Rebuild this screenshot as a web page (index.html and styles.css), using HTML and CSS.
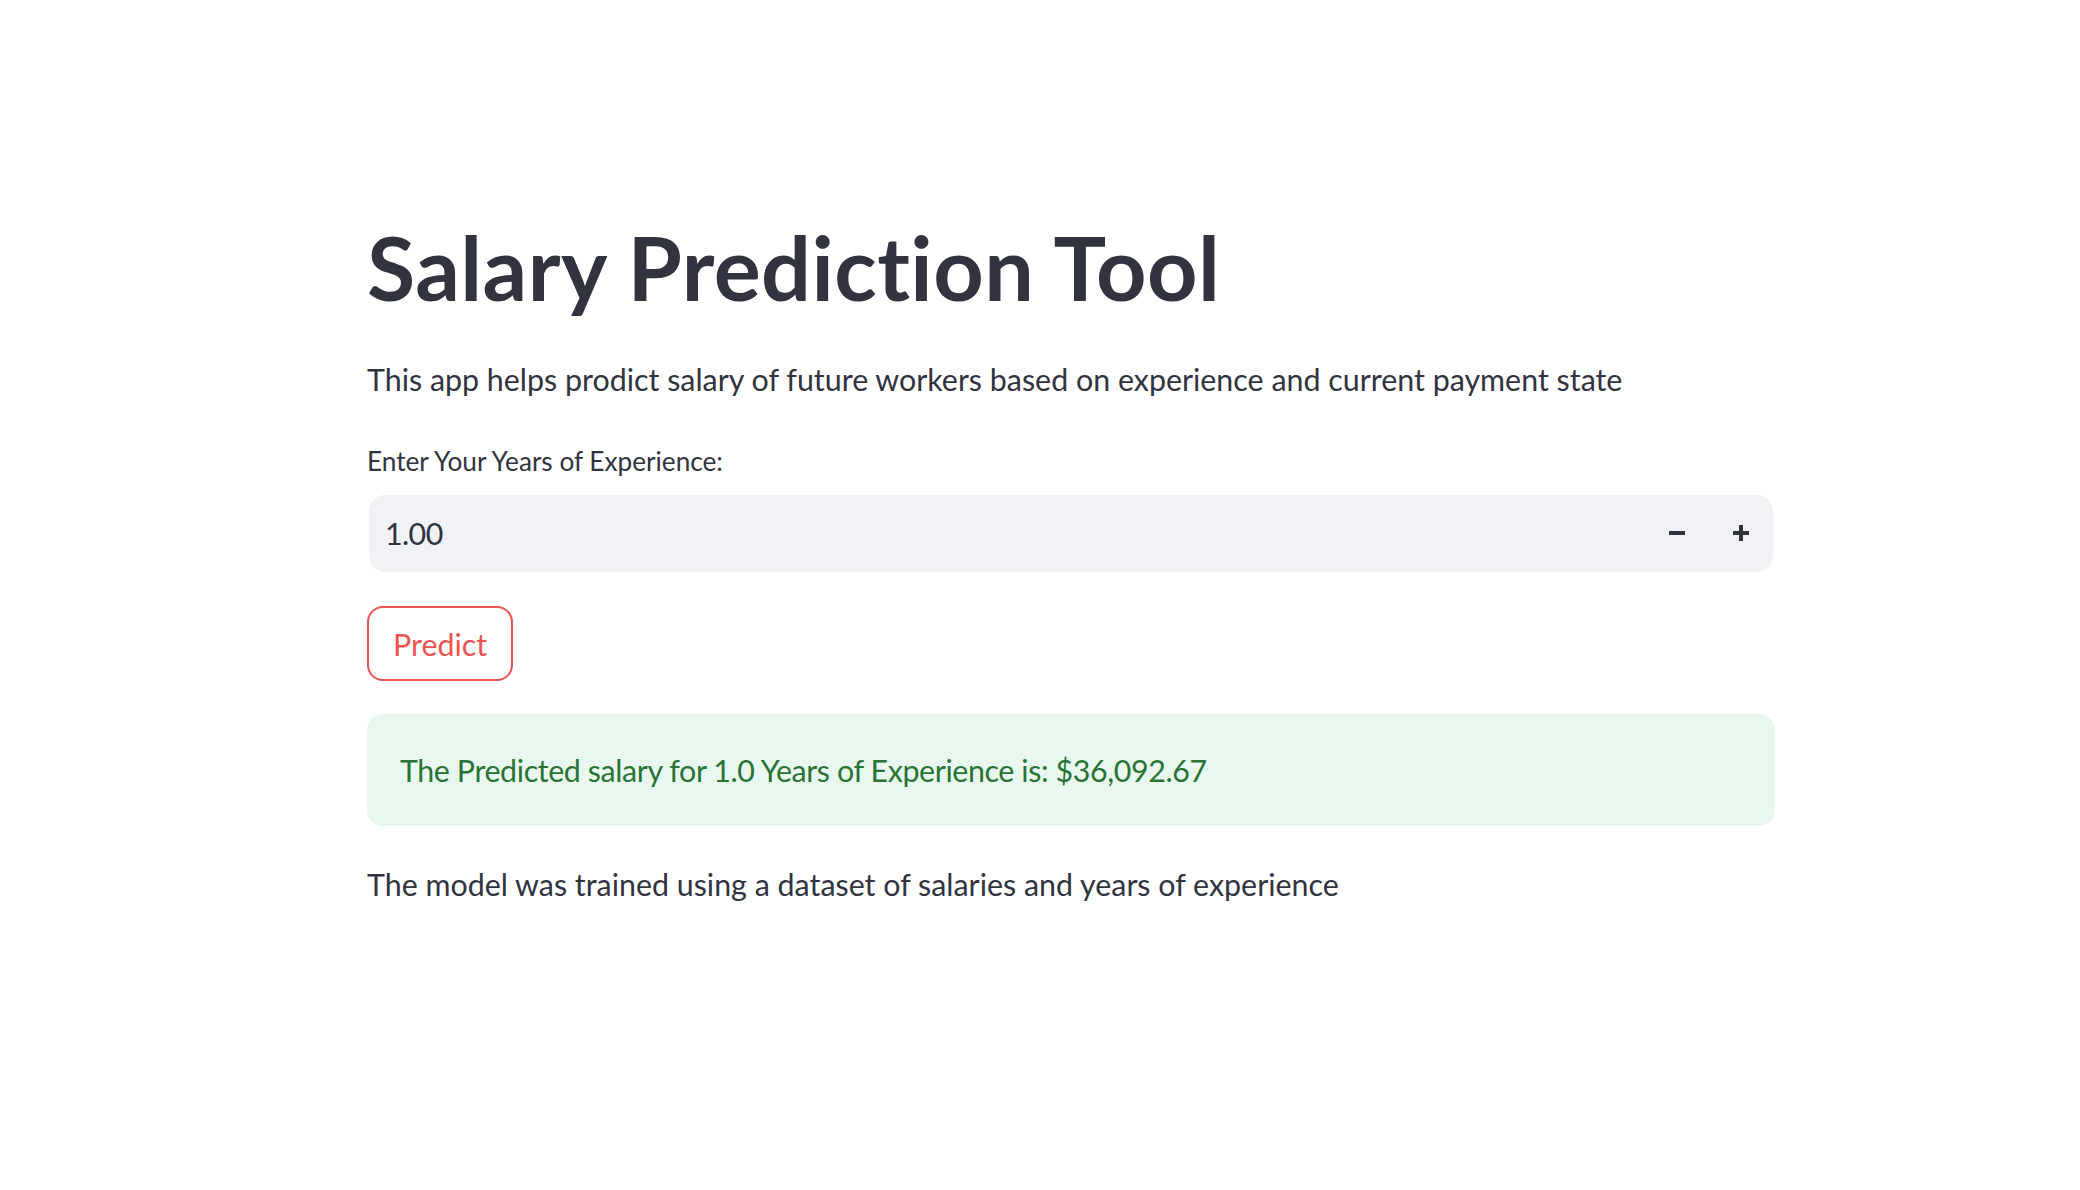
FILE: index.html
```html
<!DOCTYPE html>
<html lang="en">
<head>
<meta charset="utf-8">
<title>Salary Prediction Tool</title>
<link rel="stylesheet" href="styles.css">
</head>
<body>
<main class="main">
  <h1 class="title">Salary Prediction Tool</h1>
  <p class="intro">This app helps prodict salary of future workers based on experience and current payment state</p>
  <label class="field-label" for="years">Enter Your Years of Experience:</label>
  <div class="number-input">
    <input id="years" class="number-value" type="text" value="1.00">
    <button class="step" type="button" aria-label="Decrement">
      <svg width="16" height="16" viewBox="0 0 16 16"><rect x="0" y="6" width="16" height="4" fill="#31333F"/></svg>
    </button>
    <button class="step" type="button" aria-label="Increment">
      <svg width="16" height="16" viewBox="0 0 16 16"><rect x="0" y="6" width="16" height="4" fill="#31333F"/><rect x="6" y="0" width="4" height="16" fill="#31333F"/></svg>
    </button>
  </div>
  <button class="predict" type="button">Predict</button>
  <div class="success">The Predicted salary for 1.0 Years of Experience is: $36,092.67</div>
  <p class="outro">The model was trained using a dataset of salaries and years of experience</p>
</main>
</body>
</html>
```
FILE: styles.css
```css
html, body {
  margin: 0;
  padding: 0;
  background: #ffffff;
}

body {
  font-family: "Lato", "Noto Sans", sans-serif;
  color: #31333F;
  font-variant-ligatures: none;
}

.main {
  width: 1408px;
  margin-left: 367px;
  padding-top: 215px;
  display: flex;
  flex-direction: column;
  align-items: flex-start;
}

.title {
  margin: 0;
  font-size: 88px;
  font-weight: 700;
  line-height: 105.6px;
  letter-spacing: 0.45px;
  color: #31333F;
  white-space: nowrap;
}

.intro {
  margin: 33px 0 0;
  font-size: 30.4px;
  line-height: 51.2px;
}

.field-label {
  margin: 34px 0 9px;
  font-size: 26.2px;
  line-height: 44.8px;
}

.number-input {
  box-sizing: border-box;
  width: 100%;
  height: 81px;
  border: 2px solid #ffffff;
  border-radius: 18px;
  background: #F0F2F6;
  display: flex;
  align-items: center;
}

.number-value {
  flex: 1;
  min-width: 0;
  height: 100%;
  border: none;
  outline: none;
  background: transparent;
  padding: 0 0 0 16px;
  font-family: "Lato", "Noto Sans", sans-serif;
  font-size: 30.4px;
  letter-spacing: -0.6px;
  color: #31333F;
}

.step {
  width: 64px;
  height: 100%;
  border: none;
  background: transparent;
  padding: 0;
  display: flex;
  align-items: center;
  justify-content: center;
}

.predict {
  margin-top: 32px;
  box-sizing: border-box;
  height: 75px;
  padding: 3px 24px 0;
  border: 2px solid #EB5450;
  border-radius: 16px;
  background: #ffffff;
  color: #EB5450;
  font-family: "Lato", "Noto Sans", sans-serif;
  font-size: 30.4px;
  line-height: 51.2px;
}

.success {
  margin-top: 33px;
  box-sizing: border-box;
  width: 100%;
  height: 112px;
  padding: 31px 33px 0;
  border-radius: 16px;
  background: #E9F8EE;
  color: #2A7336;
  font-size: 30.4px;
  line-height: 51.2px;
  letter-spacing: -0.4px;
}

.outro {
  margin: 33px 0 0;
  font-size: 30.4px;
  line-height: 51.2px;
}
```
